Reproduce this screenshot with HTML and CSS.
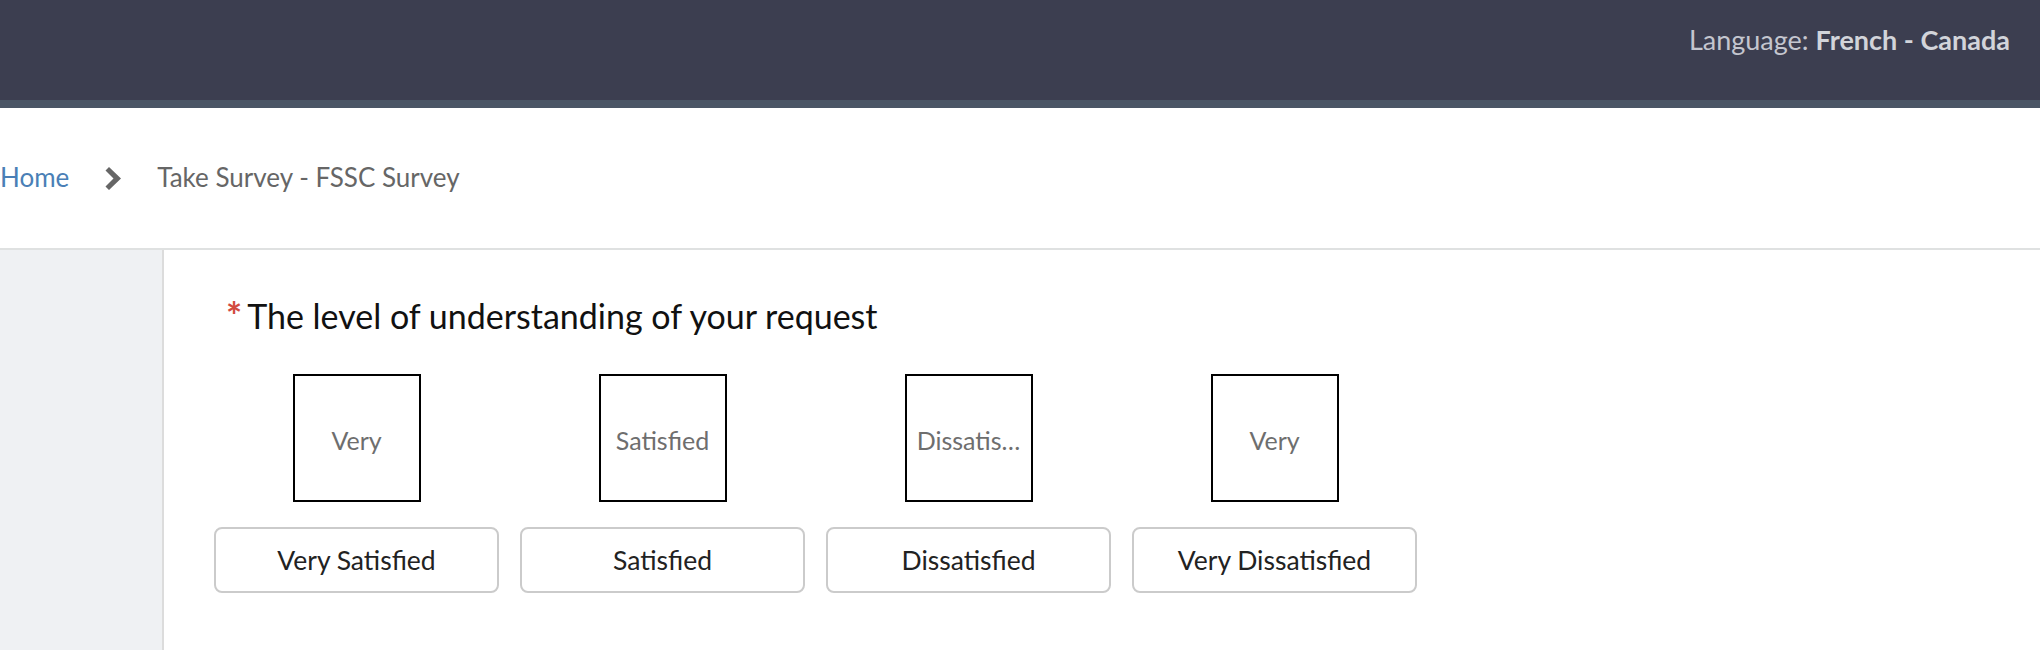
FILE: index.html
```html
<!DOCTYPE html>
<html lang="en">
<head>
<meta charset="utf-8">
<title>Take Survey - FSSC Survey</title>
<link rel="stylesheet" href="styles.css">
</head>
<body>
<header class="topbar">
  <div class="lang">Language: <b>French - Canada</b></div>
</header>
<nav class="crumbs">
  <a class="home" href="#">Home</a>
  <svg class="chev" viewBox="0 0 17 23" width="17" height="23" aria-hidden="true">
    <path d="M4 0 L16 11.5 L4 23 L0.5 19.5 L8.5 11.5 L0.5 3.5 Z" fill="#666"/>
  </svg>
  <span class="current">Take Survey - FSSC Survey</span>
</nav>
<main class="layout">
  <aside class="side"></aside>
  <section class="content">
    <h2 class="question"><span class="req">*</span><span>The level of understanding of your request</span></h2>
    <div class="options">
      <div class="option">
        <div class="thumb"><span>Very</span></div>
        <button class="choice" type="button">Very Satisfied</button>
      </div>
      <div class="option">
        <div class="thumb"><span>Satisfied</span></div>
        <button class="choice" type="button">Satisfied</button>
      </div>
      <div class="option">
        <div class="thumb"><span>Dissatis…</span></div>
        <button class="choice" type="button">Dissatisfied</button>
      </div>
      <div class="option">
        <div class="thumb"><span>Very</span></div>
        <button class="choice" type="button">Very Dissatisfied</button>
      </div>
    </div>
  </section>
</main>
</body>
</html>
```
FILE: styles.css
```css
html, body {
  margin: 0;
  padding: 0;
}
body {
  width: 2040px;
  height: 650px;
  overflow: hidden;
  background: #fff;
  font-family: Lato, "Liberation Sans", sans-serif;
  display: flex;
  flex-direction: column;
}
.topbar {
  flex: none;
  box-sizing: content-box;
  height: 76px;
  padding: 24px 30px 0 0;
  background: #3c3e50;
  border-bottom: 8px solid #4a5565;
  display: flex;
  justify-content: flex-end;
  align-items: flex-start;
}
.lang {
  color: #c4c6cf;
  font-size: 27px;
  line-height: 1.2;
}
.lang b {
  color: #d2d4da;
  font-weight: 700;
}
.crumbs {
  flex: none;
  height: 140px;
  border-bottom: 2px solid #dfe1e1;
  display: flex;
  align-items: center;
  font-size: 26px;
  line-height: 1.2;
}
.home {
  color: #4a7fb6;
  text-decoration: none;
  margin-right: 36px;
}
.chev {
  flex: none;
  margin-right: 35px;
}
.current {
  color: #666;
}
.layout {
  flex: 1;
  display: flex;
  min-height: 0;
}
.side {
  width: 162px;
  flex: none;
  background: #eff1f3;
  border-right: 2px solid #dcdcdc;
}
.content {
  flex: 1;
  padding-left: 50px;
}
.question {
  margin: 46px 0 0 12px;
  font-size: 34px;
  font-weight: 400;
  line-height: 1.2;
  color: #111;
  display: flex;
  align-items: flex-start;
}
.req {
  color: #d24a3f;
  font-size: 38px;
  font-weight: 700;
  line-height: 1;
  margin-top: 0;
  margin-right: 5px;
}
.options {
  display: flex;
  gap: 21px;
  margin-top: 37px;
}
.option {
  width: 285px;
  display: flex;
  flex-direction: column;
  align-items: center;
  gap: 25px;
}
.thumb {
  width: 128px;
  height: 128px;
  box-sizing: border-box;
  border: 2px solid #000;
  padding-top: 5px;
  display: flex;
  align-items: center;
  justify-content: center;
  overflow: hidden;
  white-space: nowrap;
  color: #6e6e6e;
  font-size: 25px;
}
.choice {
  width: 285px;
  height: 66px;
  box-sizing: border-box;
  border: 2px solid #cbcbcb;
  border-radius: 8px;
  background: #fff;
  font-family: Lato, "Liberation Sans", sans-serif;
  font-size: 26.5px;
  color: #222;
  padding: 0;
}
```
